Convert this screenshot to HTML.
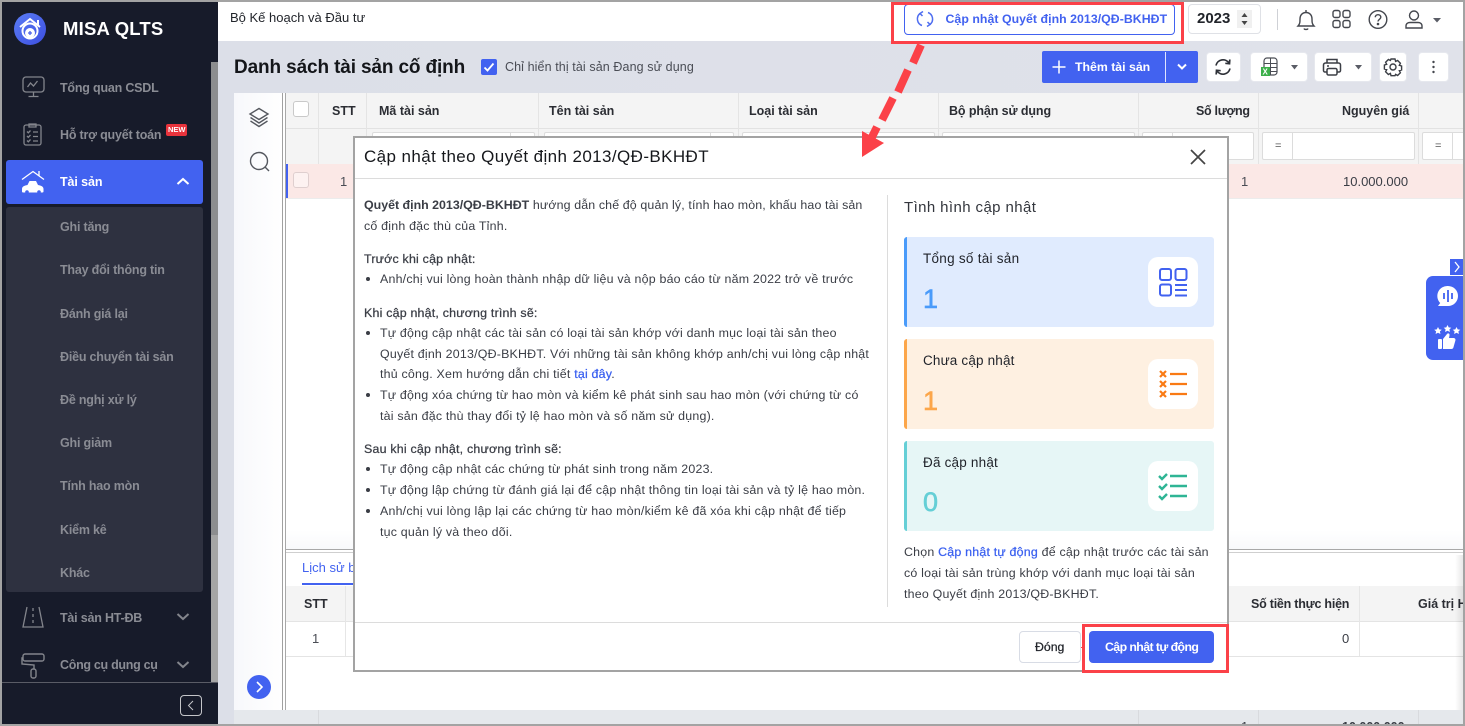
<!DOCTYPE html>
<html lang="vi"><head><meta charset="utf-8"><title>MISA QLTS</title>
<style>
html,body{margin:0;padding:0;width:1465px;height:726px;overflow:hidden;background:#fff;font-family:"Liberation Sans","Noto Sans CJK JP",sans-serif;color:#1f2229}
.a{position:absolute}
.t{position:absolute;white-space:nowrap;line-height:18px;font-size:12.5px}
.b{font-weight:bold}
.m{color:#8a8c94;font-size:12.5px;left:60px;font-weight:bold;letter-spacing:-.2px}
.d{color:#3a3d45;font-size:12.4px;left:364px;line-height:18px;letter-spacing:.21px}
.i{left:380px}
.s{-webkit-text-stroke:.25px #3a3d45}
.th{font-weight:bold;font-size:12.5px;color:#2b2d33}
.f{position:absolute;background:#fff;border:1px solid #dcdcdc;border-radius:2px;box-sizing:border-box}
.btn{position:absolute;background:#fff;border-radius:4px;border:1px solid #e6e8ee;box-sizing:border-box}
.dot{position:absolute;left:2px;top:7px;width:4px;height:4px;border-radius:50%;background:#3a3d45}
.g{margin-left:16px}
svg{position:absolute;overflow:visible}
</style></head><body>
<div class="a" style="left:0;top:0;width:1465px;height:726px;overflow:hidden">

<!-- page bg -->
<div class="a" style="left:218px;top:41px;width:1245px;height:52px;background:linear-gradient(90deg,#dcdfe8,#e0e2ea)"></div>
<div class="a" style="left:218px;top:93px;width:16px;height:631px;background:#dcdfe8"></div>
<div class="a" style="left:218px;top:2px;width:1245px;height:39px;background:#fff"></div>

<!-- header -->
<div class="t" style="left:230px;top:9px;font-size:13px;color:#22252b">Bộ Kế hoạch và Đầu tư</div>
<div class="a" style="left:904px;top:4px;width:271px;height:31px;box-sizing:border-box;border:1px solid #4262f0;border-radius:4px;background:#fff"></div>
<svg style="left:914px;top:8px" width="22" height="22" viewBox="0 0 22 22" fill="none" stroke="#4f6ef0" stroke-width="1.500"><path d="M6 5.500A7 7 0 0 0 8 17.500"/><path d="M16 16.500A7 7 0 0 0 14 4.500"/><path d="M9 3.500 6 5.500l2.500 2.500"/><path d="M13 18.500l3-2-2.500-2.500"/></svg>
<div class="t b" style="left:945.500px;top:10px;font-size:12.300px;color:#4262f0;letter-spacing:.05px">Cập nhật Quyết định 2013/QĐ-BKHĐT</div>
<div class="a" style="left:1188px;top:4px;width:73px;height:30px;box-sizing:border-box;border:1px solid #dfe1e6;border-radius:4px;background:#fff"></div>
<div class="t b" style="left:1197px;top:10px;font-size:15px;color:#22252b">2023</div>
<div class="a" style="left:1237px;top:10px;width:15px;height:18px;background:#f0f0f0"></div>
<svg style="left:1238px;top:10px" width="13" height="18"><path d="M6.500 3l3 4h-6zM6.500 15l-3-4h6z" fill="#444"/></svg>
<div class="a" style="left:1277px;top:9px;width:1px;height:21px;background:#cfd1d6"></div>
<svg style="left:1295px;top:8px" width="22" height="24" viewBox="0 0 22 24" fill="none" stroke="#44474e" stroke-width="1.400"><path d="M3 18c2-2 2-4 2-7 0-4 2.500-6.500 6-6.500s6 2.500 6 6.500c0 3 0 5 2 7z"/><path d="M11 2v2.500M9 20.500c.5 1.300 3.500 1.300 4 0"/></svg>
<svg style="left:1331px;top:9px" width="22" height="22" fill="none" stroke="#44474e" stroke-width="1.400"><rect x="2" y="1.500" width="7" height="7" rx="2"/><rect x="12" y="1.500" width="7" height="7" rx="2"/><rect x="2" y="11.500" width="7" height="7" rx="2"/><rect x="12" y="11.500" width="7" height="7" rx="2"/></svg>
<svg style="left:1367px;top:9px" width="22" height="22" fill="none" stroke="#44474e" stroke-width="1.400"><circle cx="11" cy="10.500" r="8.800"/><path d="M8.300 8.300c0-3.500 5.500-3.500 5.500 0 0 2-2.800 2-2.800 4.200"/><circle cx="11" cy="15" r=".6" fill="#44474e"/></svg>
<svg style="left:1403px;top:9px" width="22" height="22" fill="none" stroke="#44474e" stroke-width="1.400"><circle cx="11" cy="6.500" r="4.500"/><path d="M3 19v-2c0-2.500 2-3.500 4-3.500h8c2 0 4 1 4 3.500v2z"/></svg>
<svg style="left:1433px;top:18px" width="9" height="6"><path d="M0 0h8L4 4.500z" fill="#5a5d66"/></svg>

<!-- title bar -->
<div class="t b" style="left:234px;top:57px;font-size:19px;line-height:22px;color:#14161a;letter-spacing:-.13px">Danh sách tài sản cố định</div>
<div class="a" style="left:481px;top:59px;width:16px;height:16px;background:#4262f0;border-radius:2px"></div>
<svg style="left:481px;top:59px" width="16" height="16" fill="none" stroke="#fff" stroke-width="1.800"><path d="M3.500 8.500l3 3 6-7"/></svg>
<div class="t" style="left:505px;top:58px;font-size:12.500px;color:#4a4d55;letter-spacing:.1px">Chỉ hiển thị tài sản Đang sử dụng</div>
<div class="a" style="left:1042px;top:51px;width:156px;height:32px;background:#4262f0;border-radius:2px"></div>
<div class="a" style="left:1165px;top:52px;width:1px;height:30px;background:#dfe4ff"></div>
<svg style="left:1051px;top:59px" width="16" height="16" fill="none" stroke="#fff" stroke-width="1.500"><path d="M8 1.500v13M1.500 8h13"/></svg>
<div class="t b" style="left:1075px;top:58px;font-size:12.300px;color:#fff">Thêm tài sản</div>
<svg style="left:1176px;top:63px" width="12" height="8" fill="none" stroke="#fff" stroke-width="2"><path d="M2 1.500l4 4 4-4"/></svg>
<div class="btn" style="left:1206px;top:52px;width:35px;height:30px"></div>
<svg style="left:1213px;top:57px" width="20" height="20" fill="none" stroke="#2e3138" stroke-width="1.700"><path d="M3 8.500A7.200 7.200 0 0 1 16 6"/><path d="M17 11.500A7.200 7.200 0 0 1 4 14"/><path d="M16.800 2.500 16.500 6.700 12.300 6.300M3.200 17.500 3.500 13.300 7.700 13.700"/></svg>
<div class="btn" style="left:1250px;top:52px;width:58px;height:30px"></div>
<svg style="left:1260px;top:57px" width="20" height="20"><rect x="4" y="1" width="13" height="17" rx="3" fill="#fff" stroke="#4a4d55" stroke-width="1.200"/><path d="M4 6.500h13M4 10.500h13M4 14.500h13M10.500 1v17" stroke="#4a4d55" stroke-width="1"/><rect x="1" y="10" width="9" height="9" fill="#3cb04a"/><text x="2.500" y="17.500" font-size="8" font-weight="bold" fill="#fff" font-family="Liberation Sans">X</text></svg>
<svg style="left:1290px;top:65px" width="9" height="6"><path d="M1 0h7L4.500 4.500z" fill="#5a5d66"/></svg>
<div class="btn" style="left:1314px;top:52px;width:58px;height:30px"></div>
<svg style="left:1322px;top:57px" width="20" height="20" fill="none" stroke="#3b3e45" stroke-width="1.500"><path d="M5 6V2.500h10V6M4.500 15H3a1.500 1.500 0 0 1-1.500-1.500V8A2 2 0 0 1 3.500 6h13a2 2 0 0 1 2 2v5.500A1.500 1.500 0 0 1 17 15h-1.500"/><rect x="5" y="11.500" width="10" height="6.500" rx="1.500"/><path d="M5 9h2"/></svg>
<svg style="left:1354px;top:65px" width="9" height="6"><path d="M1 0h7L4.500 4.500z" fill="#5a5d66"/></svg>
<div class="btn" style="left:1379px;top:52px;width:28px;height:30px"></div>
<svg style="left:1381px;top:55px" width="24" height="24" viewBox="0 0 24 24" fill="none" stroke="#3b3e45" stroke-width="1.400"><circle cx="12" cy="12" r="3"/><path d="M10 4h4l.6 2.400 2-.9 2.800 2.800-1.100 2 2.300.7v4l-2.300.7 1.100 2-2.800 2.800-2-1.100L14 20.700h-4l-.6-2.300-2 1.100-2.800-2.800 1.100-2-2.300-.7v-4l2.300-.7-1.100-2 2.800-2.800 2 .9z"/></svg>
<div class="btn" style="left:1418px;top:52px;width:31px;height:30px"></div>
<svg style="left:1418px;top:52px" width="31" height="30" fill="#44474e"><circle cx="15.500" cy="10" r="1.200"/><circle cx="15.500" cy="15" r="1.200"/><circle cx="15.500" cy="20" r="1.200"/></svg>

<!-- main panel -->
<div class="a" style="left:234px;top:93px;width:1229px;height:617px;background:#fff"></div>
<div class="a" style="left:234px;top:93px;width:49px;height:617px;background:linear-gradient(90deg,#f7f8fb,#fff)"></div>
<div class="a" style="left:282px;top:93px;width:1px;height:617px;background:#a0a0a0"></div>
<div class="a" style="left:285px;top:93px;width:1px;height:617px;background:#a8a8a8"></div>
<svg style="left:248px;top:107px" width="22" height="22" fill="none" stroke="#55585f" stroke-width="1.400"><path d="M11 1.500 20 7l-9 5.500L2 7z"/><path d="M2.500 10.500 11 16l8.500-5.500M2.500 14 11 19.500l8.500-5.500"/></svg>
<svg style="left:248px;top:150px" width="24" height="24" fill="none" stroke="#55585f" stroke-width="1.400"><circle cx="11" cy="11" r="8.500"/><path d="M17 17l4 4"/></svg>
<svg style="left:247px;top:675px" width="24" height="24"><circle cx="12" cy="12" r="12" fill="#4262f0"/><path d="M10 7l5 5-5 5" fill="none" stroke="#fff" stroke-width="1.600"/></svg>

<!-- table head -->
<div class="a" style="left:286px;top:93px;width:1177px;height:71px;background:#f4f4f4"></div>
<div class="a" style="left:286px;top:128px;width:1177px;height:1px;background:#e2e2e2"></div>
<div class="a" style="left:293px;top:101px;width:16px;height:16px;border:1px solid #c9c9c9;border-radius:3px;background:#fff;box-sizing:border-box"></div>
<div class="a" style="left:318px;top:93px;width:1px;height:71px;background:#e4e4e4"></div>
<div class="a" style="left:366px;top:93px;width:1px;height:71px;background:#e4e4e4"></div>
<div class="a" style="left:538px;top:93px;width:1px;height:71px;background:#e4e4e4"></div>
<div class="a" style="left:738px;top:93px;width:1px;height:71px;background:#e4e4e4"></div>
<div class="a" style="left:938px;top:93px;width:1px;height:71px;background:#e4e4e4"></div>
<div class="a" style="left:1138px;top:93px;width:1px;height:71px;background:#e4e4e4"></div>
<div class="a" style="left:1258px;top:93px;width:1px;height:71px;background:#e4e4e4"></div>
<div class="a" style="left:1418px;top:93px;width:1px;height:71px;background:#e4e4e4"></div>
<div class="t th" style="left:332px;top:102px">STT</div>
<div class="t th" style="left:379px;top:102px">Mã tài sản</div>
<div class="t th" style="left:549px;top:102px">Tên tài sản</div>
<div class="t th" style="left:749px;top:102px">Loại tài sản</div>
<div class="t th" style="left:949px;top:102px;letter-spacing:-.1px">Bộ phận sử dụng</div>
<div class="t th" style="left:1196px;top:102px;letter-spacing:-.3px">Số lượng</div>
<div class="t th" style="left:1342px;top:102px">Nguyên giá</div>
<div class="f" style="left:372px;top:132px;width:163px;height:28px"></div>
<div class="a" style="left:510px;top:132px;width:1px;height:28px;background:#dcdcdc"></div>
<div class="f" style="left:544px;top:132px;width:190px;height:28px"></div>
<div class="a" style="left:710px;top:132px;width:1px;height:28px;background:#dcdcdc"></div>
<div class="f" style="left:742px;top:132px;width:193px;height:28px"></div>
<div class="f" style="left:942px;top:132px;width:193px;height:28px"></div>
<div class="f" style="left:1142px;top:132px;width:112px;height:28px"></div>
<div class="a" style="left:1172px;top:132px;width:1px;height:28px;background:#dcdcdc"></div>
<div class="f" style="left:1262px;top:132px;width:153px;height:28px"></div>
<div class="a" style="left:1292px;top:132px;width:1px;height:28px;background:#dcdcdc"></div>
<div class="t" style="left:1275px;top:137px;font-size:11px;color:#555">=</div>
<div class="f" style="left:1422px;top:132px;width:50px;height:28px"></div>
<div class="a" style="left:1452px;top:132px;width:1px;height:28px;background:#dcdcdc"></div>
<div class="t" style="left:1435px;top:137px;font-size:11px;color:#555">=</div>
<!-- pink row -->
<div class="a" style="left:286px;top:164px;width:1177px;height:34px;background:#fbe8e6;border-bottom:1px solid #ececec"></div>
<div class="a" style="left:286px;top:164px;width:2px;height:34px;background:#4262f0"></div>
<div class="a" style="left:293px;top:172px;width:16px;height:16px;border:1px solid #dfcfcf;border-radius:3px;background:#fdf2f1;box-sizing:border-box"></div>
<div class="t" style="left:340px;top:173px;font-size:13px;color:#4a4d55">1</div>
<div class="t" style="left:1241px;top:173px;font-size:13px;color:#4a4d55">1</div>
<div class="t" style="left:1343px;top:173px;font-size:13px;color:#3a3d45">10.000.000</div>

<!-- lower table -->
<div class="a" style="left:286px;top:530px;width:1177px;height:19px;background:linear-gradient(#fff,#f8f9fb)"></div>
<div class="a" style="left:286px;top:549px;width:1177px;height:1px;background:#a8a8a8"></div>
<div class="a" style="left:286px;top:552px;width:1177px;height:1px;background:#cfcfcf"></div>
<div class="t" style="left:302px;top:559px;font-size:13px;color:#4262f0">Lịch sử b</div>
<div class="a" style="left:302px;top:583px;width:60px;height:2px;background:#4262f0"></div>
<div class="a" style="left:286px;top:586px;width:1177px;height:35px;background:#f4f4f4"></div>
<div class="a" style="left:286px;top:621px;width:1177px;height:1px;background:#e4e4e4"></div>
<div class="a" style="left:286px;top:656px;width:1177px;height:1px;background:#e4e4e4"></div>
<div class="a" style="left:345px;top:586px;width:1px;height:70px;background:#e6e6e6"></div>
<div class="a" style="left:1359px;top:586px;width:1px;height:70px;background:#e6e6e6"></div>
<div class="t th" style="left:304px;top:595px">STT</div>
<div class="t" style="left:312px;top:630px;font-size:13px;color:#4a4d55">1</div>
<div class="t th" style="left:1251px;top:595px;letter-spacing:-.23px">Số tiền thực hiện</div>
<div class="t th" style="left:1418px;top:595px">Giá trị H</div>
<div class="t" style="left:1342px;top:630px;font-size:13px;color:#3a3d45">0</div>
<div class="a" style="left:234px;top:710px;width:1229px;height:14px;background:#e5e8ec;overflow:hidden">
<div class="t" style="left:1007px;top:8px;font-size:13px;color:#3a3d45">1</div>
<div class="t b" style="left:1108px;top:8px;font-size:12.500px;color:#3a3d45">10.000.000</div>
</div>
<div class="a" style="left:318px;top:710px;width:1px;height:14px;background:#d8dade"></div>
<div class="a" style="left:1138px;top:710px;width:1px;height:14px;background:#d8dade"></div>
<div class="a" style="left:1258px;top:710px;width:1px;height:14px;background:#d8dade"></div>
<div class="a" style="left:1418px;top:710px;width:1px;height:14px;background:#d8dade"></div>
<div class="a" style="left:1455px;top:555px;width:8px;height:155px;background:linear-gradient(90deg,rgba(0,0,0,0),rgba(0,0,0,.09))"></div>

<!-- feedback widget -->
<div class="a" style="left:1450px;top:259px;width:13px;height:16px;background:#4262f0"></div>
<svg style="left:1450px;top:259px" width="13" height="16" fill="none" stroke="#fff" stroke-width="1.300"><path d="M5 3l4 5-4 5"/></svg>
<div class="a" style="left:1426px;top:276px;width:37px;height:84px;background:#4262f0;border-radius:7px 0 0 7px"></div>
<svg style="left:1437px;top:286px" width="22" height="22"><path d="M11 0a10 10 0 0 1 0 20H1l2.200-3A10 10 0 0 1 11 0z" fill="#fff"/><path d="M7 7v6M11 4v12M15 7v6" stroke="#4262f0" stroke-width="1.800"/></svg>
<svg style="left:1433px;top:324px" width="26" height="26" fill="#fff"><path d="M5 3l1.200 2.400 2.600.3-1.900 1.700.5 2.600L5 8.800l-2.400 1.200.5-2.600L1.200 5.700l2.600-.3zM14.500 1l1.200 2.400 2.600.3-1.900 1.700.5 2.600-2.400-1.200-2.400 1.200.5-2.600-1.900-1.700 2.600-.3zM23.500 3l1.200 2.400 2.600.3-1.900 1.700.5 2.600-2.400-1.200-2.400 1.200.5-2.600-1.900-1.700 2.600-.3z"/><rect x="5" y="15" width="4" height="10" rx="1"/><path d="M10 15l4-5c1-1.200 3-.5 2.500 1.500L16 14h4.500c1.500 0 2.300 1.200 1.900 2.500l-2 7c-.3 1-1 1.500-2 1.500H10z"/></svg>

<!-- sidebar -->
<div class="a" style="left:2px;top:2px;width:216px;height:722px;background:#171b2a"></div>
<div class="a" style="left:211px;top:62px;width:7px;height:620px;background:#8c8d8f"></div>
<div class="a" style="left:211px;top:535px;width:7px;height:147px;background:#a5a5a5"></div>
<svg style="left:14px;top:13px" width="32" height="32" viewBox="0 0 32 32"><defs><linearGradient id="g" x1="0" y1="0" x2="1" y2="1"><stop offset="0" stop-color="#5a7cf5"/><stop offset="1" stop-color="#3d4fe0"/></linearGradient></defs><circle cx="16" cy="16" r="16" fill="url(#g)"/><path d="M6 14 16 6l10 8" fill="none" stroke="#fff" stroke-width="2"/><path d="M24 7v5" stroke="#fff" stroke-width="2"/><circle cx="16" cy="18" r="7.500" fill="none" stroke="#fff" stroke-width="2"/><circle cx="16" cy="20" r="5" fill="#fff"/><path d="M14 20h4M16 18v4" stroke="#4a60e8" stroke-width="1.300"/></svg>
<div class="t b" style="left:63px;top:17px;font-size:18.500px;line-height:24px;color:#fff;letter-spacing:.2px">MISA QLTS</div>

<svg style="left:22px;top:76px" width="24" height="22" fill="none" stroke="#83858c" stroke-width="1.300"><rect x="1" y="1" width="21" height="15" rx="3"/><path d="M11.500 16v4M6.500 20.500h10M5.500 11l3-4 3 3 4-5"/></svg>
<div class="t m" style="top:79px">Tổng quan CSDL</div>
<svg style="left:22px;top:122px" width="22" height="24" fill="none" stroke="#83858c" stroke-width="1.300"><rect x="2" y="3" width="17" height="20" rx="2"/><path d="M7 5V2h7v3zM5 9.500l1.300 1.300L8.500 8.500M5 14l1.300 1.300L8.500 13M5 18.500l1.300 1.300L8.500 17.500M11 10h5M11 14.500h5M11 19h5"/></svg>
<div class="t m" style="top:126px">Hỗ trợ quyết toán</div>
<div class="a" style="left:166px;top:124px;width:21px;height:12px;background:#e8333c;border-radius:2px"></div>
<div class="t b" style="left:168px;top:124px;font-size:7.500px;line-height:12px;color:#fff">NEW</div>

<div class="a" style="left:6px;top:160px;width:197px;height:44px;background:#4262f0;border-radius:3px"></div>
<svg style="left:21px;top:170px" width="25" height="24" fill="#fff"><path d="M1 9.500 12 1.500l11 8" fill="none" stroke="#fff" stroke-width="1.300"/><path d="M18 1v5" stroke="#fff" stroke-width="1.300"/><path d="M6.500 15l2-4h6.500l2 4c3 .5 5.500 1.500 5.500 4v2.500c0 .5-.5 1-1 1H2c-.5 0-1-.5-1-1V19c0-2.500 2.500-3.500 5.500-4z"/><circle cx="6" cy="22" r="1.800" fill="#4262f0"/><circle cx="18" cy="22" r="1.800" fill="#4262f0"/></svg>
<div class="t b" style="left:60px;top:173px;font-size:12.500px;color:#fff;letter-spacing:-.1px">Tài sản</div>
<svg style="left:176px;top:177px" width="14" height="9" fill="none" stroke="#fff" stroke-width="2"><path d="M1.500 7l5.500-5 5.500 5"/></svg>

<div class="a" style="left:6px;top:207px;width:197px;height:385px;background:#2e3140;border-radius:3px"></div>
<div class="t m" style="top:218px">Ghi tăng</div>
<div class="t m" style="top:261px">Thay đổi thông tin</div>
<div class="t m" style="top:305px">Đánh giá lại</div>
<div class="t m" style="top:348px">Điều chuyển tài sản</div>
<div class="t m" style="top:391px">Đề nghị xử lý</div>
<div class="t m" style="top:434px">Ghi giảm</div>
<div class="t m" style="top:477px">Tính hao mòn</div>
<div class="t m" style="top:521px">Kiểm kê</div>
<div class="t m" style="top:564px">Khác</div>

<svg style="left:21px;top:605px" width="24" height="24" fill="none" stroke="#83858c" stroke-width="1.300"><path d="M6 2 2 22h20L18 2M12 3v3M12 9v3M12 15v3"/></svg>
<div class="t m" style="top:609px">Tài sản HT-ĐB</div>
<svg style="left:176px;top:612px" width="14" height="9" fill="none" stroke="#83858c" stroke-width="2"><path d="M1.500 2l5.500 5 5.500-5"/></svg>
<svg style="left:21px;top:653px" width="24" height="26" fill="none" stroke="#83858c" stroke-width="1.400"><rect x="2" y="1" width="21" height="7" rx="2"/><path d="M2 5H1v6l12 1v4"/><rect x="10" y="16" width="5" height="9" rx="2"/></svg>
<div class="t m" style="top:656px;letter-spacing:-.3px">Công cụ dụng cụ</div>
<svg style="left:176px;top:660px" width="14" height="9" fill="none" stroke="#83858c" stroke-width="2"><path d="M1.500 2l5.500 5 5.500-5"/></svg>
<div class="a" style="left:2px;top:682px;width:216px;height:1px;background:#5a5c66"></div>
<div class="a" style="left:180px;top:695px;width:22px;height:21px;border:1px solid #c4c5c9;border-radius:4px;box-sizing:border-box"></div>
<svg style="left:180px;top:695px" width="22" height="21" fill="none" stroke="#c4c5c9" stroke-width="1"><path d="M13 6l-4.500 4.500L13 15"/></svg>

<!-- modal -->
<div class="a" style="left:353px;top:136px;width:876px;height:536px;box-sizing:border-box;border:2px solid #a3a3a3;background:#fff"></div>
<div class="t" style="left:364px;top:146px;font-size:17px;line-height:22px;color:#16181c;letter-spacing:.4px">Cập nhật theo Quyết định 2013/QĐ-BKHĐT</div>
<svg style="left:1190px;top:149px" width="16" height="16" fill="none" stroke="#444" stroke-width="1.700"><path d="M1 1l14 14M15 1 1 15"/></svg>
<div class="a" style="left:355px;top:178px;width:872px;height:1px;background:#dcdcdc"></div>
<div class="a" style="left:887px;top:195px;width:1px;height:412px;background:#dcdcdc"></div>
<div class="a" style="left:355px;top:622px;width:872px;height:1px;background:#dcdcdc"></div>

<div class="t d" style="top:196px"><b style="letter-spacing:0">Quyết định 2013/QĐ-BKHĐT</b> <span style="letter-spacing:.13px">hướng dẫn chế độ quản lý, tính hao mòn, khấu hao tài sản</span></div>
<div class="t d" style="top:217px">cố định đặc thù của Tỉnh.</div>
<div class="t d s" style="top:250px">Trước khi cập nhật:</div>
<div class="t d" style="top:270px"><span class="dot"></span><span class="g">Anh/chị vui lòng hoàn thành nhập dữ liệu và nộp báo cáo từ năm 2022 trở về trước</span></div>
<div class="t d s" style="top:304px">Khi cập nhật, chương trình sẽ:</div>
<div class="t d" style="top:324px"><span class="dot"></span><span class="g">Tự động cập nhật các tài sản có loại tài sản khớp với danh mục loại tài sản theo</span></div>
<div class="t d i" style="top:345px">Quyết định 2013/QĐ-BKHĐT. Với những tài sản không khớp anh/chị vui lòng cập nhật</div>
<div class="t d i" style="top:365px">thủ công. Xem hướng dẫn chi tiết <span style="color:#3a60f0;-webkit-text-stroke:.25px #3a60f0">tại đây</span>.</div>
<div class="t d" style="top:386px"><span class="dot"></span><span class="g">Tự động xóa chứng từ hao mòn và kiểm kê phát sinh sau hao mòn (với chứng từ có</span></div>
<div class="t d i" style="top:407px">tài sản đặc thù thay đổi tỷ lệ hao mòn và số năm sử dụng).</div>
<div class="t d s" style="top:440px">Sau khi cập nhật, chương trình sẽ:</div>
<div class="t d" style="top:460px"><span class="dot"></span><span class="g">Tự động cập nhật các chứng từ phát sinh trong năm 2023.</span></div>
<div class="t d" style="top:481px"><span class="dot"></span><span class="g">Tự động lập chứng từ đánh giá lại để cập nhật thông tin loại tài sản và tỷ lệ hao mòn.</span></div>
<div class="t d" style="top:502px"><span class="dot"></span><span class="g">Anh/chị vui lòng lập lại các chứng từ hao mòn/kiểm kê đã xóa khi cập nhật để tiếp</span></div>
<div class="t d i" style="top:523px">tục quản lý và theo dõi.</div>

<div class="t" style="left:904px;top:198px;font-size:15px;line-height:20px;color:#33363d;letter-spacing:.4px">Tình hình cập nhật</div>

<div class="a" style="left:904px;top:237px;width:310px;height:90px;background:#e0ebfe;border-radius:3px;border-left:3px solid #4a9bfa;box-sizing:border-box"></div>
<div class="t" style="left:923px;top:250px;font-size:13.500px;color:#1f2229;letter-spacing:.27px">Tổng số tài sản</div>
<div class="t" style="left:923px;top:284px;font-size:27px;line-height:30px;color:#4a9bfa;-webkit-text-stroke:.6px #4a9bfa">1</div>
<div class="a" style="left:1148px;top:257px;width:50px;height:50px;background:#fff;border-radius:10px"></div>
<svg style="left:1148px;top:257px" width="50" height="50" fill="none" stroke="#4262f0" stroke-width="2"><rect x="12" y="12" width="11" height="11" rx="2"/><rect x="27.500" y="12" width="11" height="11" rx="2"/><rect x="12" y="27.500" width="11" height="11" rx="2"/><path d="M27 28h12M27 33h12M27 38.500h12"/></svg>

<div class="a" style="left:904px;top:339px;width:310px;height:90px;background:#fef0e1;border-radius:3px;border-left:3px solid #fca64a;box-sizing:border-box"></div>
<div class="t" style="left:923px;top:352px;font-size:13.500px;color:#1f2229;letter-spacing:.17px">Chưa cập nhật</div>
<div class="t" style="left:923px;top:386px;font-size:27px;line-height:30px;color:#fca64a;-webkit-text-stroke:.6px #fca64a">1</div>
<div class="a" style="left:1148px;top:359px;width:50px;height:50px;background:#fff;border-radius:10px"></div>
<svg style="left:1148px;top:359px" width="50" height="50" fill="none" stroke="#f97a14" stroke-width="2.200"><path d="M12 12l6 6M18 12l-6 6M12 22l6 6M18 22l-6 6M12 32l6 6M18 32l-6 6M22 15h17M22 25h17M22 35h17"/></svg>

<div class="a" style="left:904px;top:441px;width:310px;height:90px;background:#e6f6f6;border-radius:3px;border-left:3px solid #65cfd6;box-sizing:border-box"></div>
<div class="t" style="left:923px;top:454px;font-size:13.500px;color:#1f2229;letter-spacing:.2px">Đã cập nhật</div>
<div class="t" style="left:923px;top:487px;font-size:27px;line-height:30px;color:#65cfd6;-webkit-text-stroke:.6px #65cfd6">0</div>
<div class="a" style="left:1148px;top:461px;width:50px;height:50px;background:#fff;border-radius:10px"></div>
<svg style="left:1148px;top:461px" width="50" height="50" fill="none" stroke="#2fb595" stroke-width="2.400"><path d="M11 15l3 3 5-5M11 25l3 3 5-5M11 35l3 3 5-5M22 15h17M22 25h17M22 35h17"/></svg>

<div class="t d" style="left:904px;top:543px">Chọn <span style="color:#3a60f0;-webkit-text-stroke:.25px #3a60f0">Cập nhật tự động</span> để cập nhật trước các tài sản</div>
<div class="t d" style="left:904px;top:564px">có loại tài sản trùng khớp với danh mục loại tài sản</div>
<div class="t d" style="left:904px;top:585px">theo Quyết định 2013/QĐ-BKHĐT.</div>

<div class="a" style="left:1019px;top:631px;width:62px;height:32px;box-sizing:border-box;background:#fff;border:1px solid #d8dce5;border-radius:4px"></div>
<div class="t" style="left:1035px;top:638px;font-size:12.300px;-webkit-text-stroke:.25px #22252b;color:#22252b">Đóng</div>
<div class="a" style="left:1089px;top:631px;width:125px;height:32px;background:#4262f0;border-radius:4px"></div>
<div class="t b" style="left:1105px;top:638px;font-size:12.300px;color:#fff;letter-spacing:-.57px">Cập nhật tự động</div>

<!-- red annotations -->
<div class="a" style="left:891px;top:2px;width:293px;height:42px;box-sizing:border-box;border:3px solid #fb4148"></div>
<div class="a" style="left:1082px;top:624px;width:147px;height:49px;box-sizing:border-box;border:3px solid #fb4148"></div>
<div class="a" style="left:1081px;top:647px;width:3px;height:1px;background:#fb4148"></div>
<svg style="left:0;top:0" width="1465" height="726"><path d="M921 45 913 63M908 70 898 92M893 98 882 120M877 127 872 137" stroke="#fb4148" stroke-width="8" fill="none"/><path d="M862 157V131L884 143z" fill="#fb4148"/></svg>

<!-- outer frame -->
<div class="a" style="left:0;top:0;width:1465px;height:726px;box-sizing:border-box;border:2px solid #a3a3a3;pointer-events:none"></div>
</div>
</body></html>
